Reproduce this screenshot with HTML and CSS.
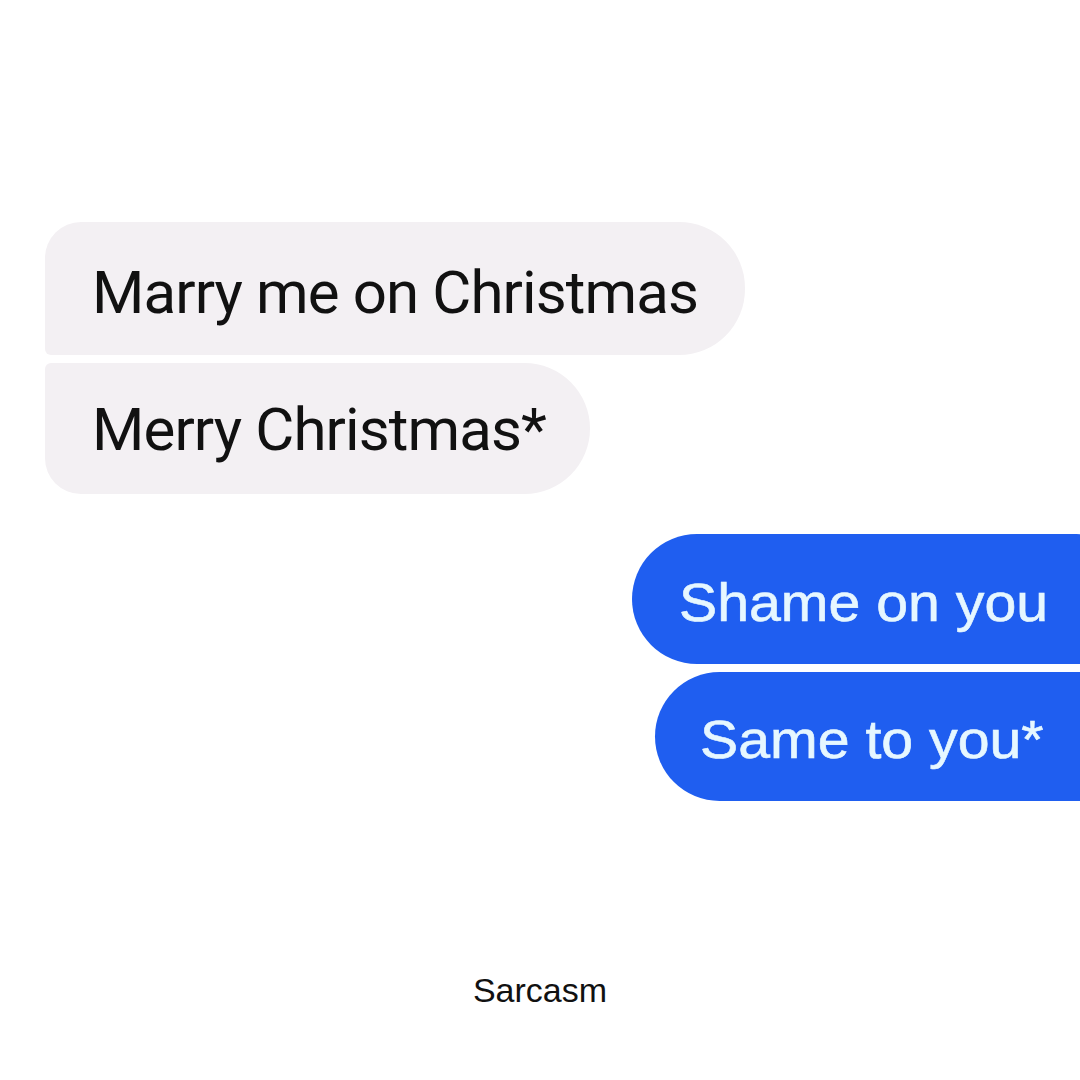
FILE: index.html
```html
<!DOCTYPE html>
<html>
<head>
<meta charset="utf-8">
<link rel="stylesheet" href="styles.css">
</head>
<body>
<div class="page">
  <div class="thread">
    <div class="group incoming">
      <div class="bubble grey first"><span class="txt">Marry me on Christmas</span></div>
      <div class="bubble grey last"><span class="txt">Merry Christmas*</span></div>
    </div>
    <div class="group outgoing">
      <div class="bubble blue first"><span class="txt">Shame on you</span></div>
      <div class="bubble blue last"><span class="txt">Same to you*</span></div>
    </div>
  </div>
  <div class="caption">Sarcasm</div>
</div>
</body>
</html>
```
FILE: styles.css
```css
html, body {
  margin: 0;
  padding: 0;
  background: #ffffff;
  overflow: hidden;
}
.page {
  width: 1080px;
  height: 1080px;
  display: flex;
  flex-direction: column;
  overflow: hidden;
}
.thread {
  padding-top: 222px;
  display: flex;
  flex-direction: column;
  gap: 40px;
}
.group {
  display: flex;
  flex-direction: column;
  gap: 8px;
}
.incoming {
  align-items: flex-start;
  padding-left: 45px;
}
.outgoing {
  align-items: flex-end;
  margin-right: -40px;
}
.bubble {
  box-sizing: border-box;
  height: 131px;
  display: flex;
  align-items: center;
  white-space: nowrap;
}
.txt {
  display: inline-block;
}
.grey {
  background: #f3f0f3;
  color: #111111;
  font-family: Roboto, "Noto Sans", sans-serif;
  font-size: 60px;
  letter-spacing: -0.9px;
  padding: 0 48px 0 47px;
}
.grey.first {
  height: 133px;
  width: 700px;
  border-radius: 36px 66px 66px 6px;
  padding-top: 8px;
}
.grey.last {
  width: 545px;
  border-radius: 6px 66px 66px 36px;
  padding-top: 2px;
}
.blue {
  background: #1f5ef0;
  color: #e6f7ff;
  font-family: "Liberation Sans", Arial, sans-serif;
  font-size: 53px;
  padding: 0 60px 0 48px;
}
.blue .txt {
  transform: scaleX(1.08);
  transform-origin: left center;
  -webkit-text-stroke: 0.6px #e6f7ff;
}
.blue.first {
  height: 130px;
  width: 488px;
  border-radius: 66px 44px 6px 66px;
  padding-left: 47px;
  padding-top: 6px;
}
.blue.last {
  height: 129px;
  width: 465px;
  border-radius: 66px 6px 44px 66px;
  padding-left: 45px;
  padding-top: 6px;
}
.caption {
  margin-top: 170px;
  text-align: center;
  font-family: "Liberation Sans", Arial, sans-serif;
  font-size: 34px;
  color: #111111;
}
```
